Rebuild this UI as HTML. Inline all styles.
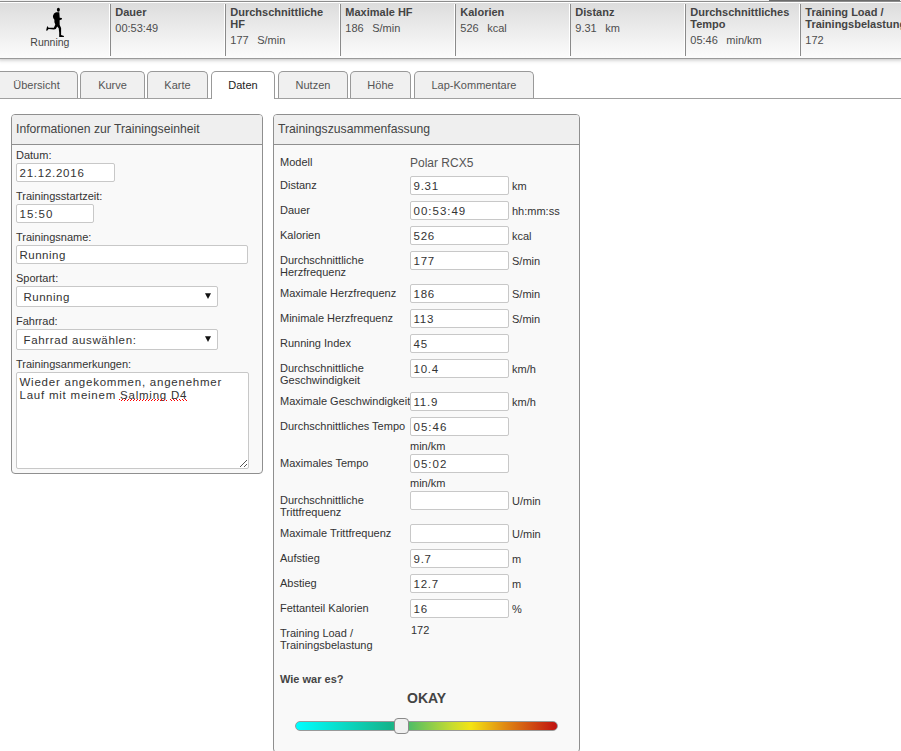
<!DOCTYPE html>
<html><head><meta charset="utf-8">
<style>
*{box-sizing:border-box;margin:0;padding:0}
html,body{width:901px;height:751px;overflow:hidden;background:#fff;font-family:"Liberation Sans",sans-serif;font-size:11px;color:#333}
.abs{position:absolute}
#hdr{position:absolute;left:-2px;top:1px;width:905px;height:58px;border-top:1px solid #8c8c8c;border-bottom:1px solid #9a9a9a;
 background:linear-gradient(#dcdcdc,#fcfcfc);box-shadow:0 1px 4px rgba(0,0,0,.25)}
#hdr:before{content:"";position:absolute;left:0;right:0;top:0;height:1px;background:#fff}
.sep{position:absolute;top:4px;height:52px;width:1px;background:#8a8a8a;box-shadow:-1px 0 0 #fff}
.ht{position:absolute;font-weight:bold;line-height:12px;color:#444;white-space:nowrap}
.hv{position:absolute;line-height:12px;color:#4d4d4d;white-space:nowrap}
.hv span{margin-left:8.5px}
#tabs{position:absolute;left:0;top:98px;width:901px;height:1px;background:#a0a0a0;z-index:1}
.tab{position:absolute;top:71px;height:28px;border:1px solid #999;border-bottom:none;border-radius:5px 5px 0 0;background:#f0f0f0;color:#555;text-align:center;line-height:27px;font-size:11px}
.tab.act{background:#fff;color:#222;height:28px;z-index:2}
.panel{position:absolute;top:114px;border:1px solid #8f8f8f;border-radius:4px;background:#f9f9f9;overflow:hidden}
.ph{height:30px;border-bottom:1px solid #8f8f8f;background:#efefef;font-size:12.2px;color:#444;padding-left:4px;line-height:29px}
.lbl{position:absolute;color:#333;white-space:nowrap;line-height:12px}
.inp{position:absolute;border:1px solid #c8c8c8;border-radius:2px;background:#fff;color:#333;font-size:11.5px;letter-spacing:.75px;white-space:nowrap;padding-left:2.5px;line-height:18px}
.sel .arr{position:absolute;left:187.5px;top:6px}
.sq{position:relative}
.sq:before,.sq:after{content:"";position:absolute;left:-1px;right:0;height:1px;background:repeating-linear-gradient(90deg,#f00 0 1px,transparent 1px 3px)}
.sq:before{top:10px}
.sq:after{top:11px;left:.5px}
.unit{position:absolute;color:#333;white-space:nowrap;line-height:12px}
</style></head><body>

<div id="hdr"></div>
<div class="abs" style="left:769px;top:0;width:131px;height:1px;background:#6b6b6b;z-index:3"></div>
<!-- runner icon -->
<svg class="abs" style="left:40px;top:4px" width="30" height="36" viewBox="0 0 30 36">
 <ellipse cx="18.4" cy="5.8" rx="1.5" ry="2.05" fill="#000"/>
 <path d="M16 8.3 L19.3 8.2 L19.7 13.8 L21.8 13.9 L22 15.3 L19.6 16.3 L19.7 21 L21.1 24 L21.1 31.1 L24 32.1 L23.8 33.1 L19.2 33.1 L19.2 28.7 L18.7 24.2 L17.2 22.6 L15.8 24.9 L13.9 25.4 L8.6 24.9 L7.1 26.8 L6.1 26.4 L7.2 22 L8.6 23.8 L13.9 23.8 L15.3 20.6 L14.4 18.2 L14.4 15.8 L13.2 13.9 L12.9 12 L14 9.5 Z" fill="#000"/>
</svg>
<div class="abs" style="left:30.3px;top:36.2px;font-size:10.5px;color:#444;line-height:12px">Running</div>

<div class="sep" style="left:110px"></div>
<div class="sep" style="left:225px"></div>
<div class="sep" style="left:340px"></div>
<div class="sep" style="left:455px"></div>
<div class="sep" style="left:570px"></div>
<div class="sep" style="left:685px"></div>
<div class="sep" style="left:800px"></div>

<div class="ht" style="left:115.3px;top:6px">Dauer</div>
<div class="hv" style="left:115.3px;top:22px">00:53:49</div>
<div class="ht" style="left:230.3px;top:6px">Durchschnittliche<br>HF</div>
<div class="hv" style="left:230.3px;top:34px">177<span>S/min</span></div>
<div class="ht" style="left:345.3px;top:6px">Maximale HF</div>
<div class="hv" style="left:345.3px;top:22px">186<span>S/min</span></div>
<div class="ht" style="left:460.3px;top:6px">Kalorien</div>
<div class="hv" style="left:460.3px;top:22px">526<span>kcal</span></div>
<div class="ht" style="left:575.3px;top:6px">Distanz</div>
<div class="hv" style="left:575.3px;top:22px">9.31<span>km</span></div>
<div class="ht" style="left:690.3px;top:6px">Durchschnittliches<br>Tempo</div>
<div class="hv" style="left:690.3px;top:34px">05:46<span>min/km</span></div>
<div class="ht" style="left:805.3px;top:6px">Training Load /<br>Trainingsbelastung</div>
<div class="hv" style="left:805.3px;top:34px">172</div>

<!-- tabs -->
<div id="tabs"></div>
<div class="tab" style="left:-5px;width:83px">Übersicht</div>
<div class="tab" style="left:80px;width:65px">Kurve</div>
<div class="tab" style="left:147px;width:61px">Karte</div>
<div class="tab act" style="left:211px;width:64px">Daten</div>
<div class="tab" style="left:278px;width:70px">Nutzen</div>
<div class="tab" style="left:350px;width:61px">Höhe</div>
<div class="tab" style="left:414px;width:120px">Lap-Kommentare</div>

<!-- left panel -->
<div class="panel" style="left:11px;width:252px;height:360px">
 <div class="ph">Informationen zur Trainingseinheit</div>
</div>
<div class="lbl" style="left:16px;top:149px">Datum:</div>
<div class="inp" style="left:16px;top:163px;width:99px;height:19px">21.12.2016</div>
<div class="lbl" style="left:16px;top:190px">Trainingsstartzeit:</div>
<div class="inp" style="left:16px;top:204px;width:78px;height:19px;letter-spacing:1px">15:50</div>
<div class="lbl" style="left:16px;top:231px">Trainingsname:</div>
<div class="inp" style="left:16px;top:245px;width:232px;height:19px;letter-spacing:.5px">Running</div>
<div class="lbl" style="left:16px;top:272px">Sportart:</div>
<div class="inp sel" style="left:16px;top:286px;width:202px;height:21px;padding-left:6.5px;line-height:20px;letter-spacing:.5px">Running<svg class="arr" width="7" height="7" viewBox="0 0 7 7"><polygon points="0,0.2 6,0.2 3,6" fill="#111"/></svg></div>
<div class="lbl" style="left:16px;top:315px">Fahrrad:</div>
<div class="inp sel" style="left:16px;top:329px;width:202px;height:21px;padding-left:6.5px;line-height:20px;letter-spacing:.63px">Fahrrad auswählen:<svg class="arr" width="7" height="7" viewBox="0 0 7 7"><polygon points="0,0.2 6,0.2 3,6" fill="#111"/></svg></div>
<div class="lbl" style="left:16px;top:358px">Trainingsanmerkungen:</div>
<div class="inp" style="left:16px;top:372px;width:233px;height:97px;line-height:13px;padding-top:3px;letter-spacing:.77px">Wieder angekommen, angenehmer<br>Lauf mit meinem <span class="sq">Salming</span> <span class="sq">D4</span></div>
<svg class="abs" style="left:239px;top:459px" width="9" height="9" viewBox="0 0 9 9" shape-rendering="crispEdges" fill="#555"><rect x="1" y="7" width="1" height="1"/><rect x="2" y="6" width="1" height="1"/><rect x="3" y="5" width="1" height="1"/><rect x="4" y="4" width="1" height="1"/><rect x="5" y="3" width="1" height="1"/><rect x="6" y="2" width="1" height="1"/><rect x="7" y="1" width="1" height="1"/><rect x="5" y="7" width="1" height="1"/><rect x="6" y="6" width="1" height="1"/><rect x="7" y="5" width="1" height="1"/></svg>

<!-- right panel -->
<div class="panel" style="left:273px;width:307px;height:639px">
 <div class="ph">Trainingszusammenfassung</div>
</div>

<div class="lbl" style="left:280px;top:156px">Modell</div>
<div class="abs" style="left:410px;top:156px;font-size:12px;line-height:14px;color:#555">Polar RCX5</div>
<div class="lbl" style="left:280px;top:179px">Distanz</div>
<div class="inp" style="left:410px;top:176px;width:99px;height:19px">9.31</div>
<div class="unit" style="left:512px;top:180px">km</div>
<div class="lbl" style="left:280px;top:204px">Dauer</div>
<div class="inp" style="left:410px;top:201px;width:99px;height:19px;letter-spacing:1px">00:53:49</div>
<div class="unit" style="left:512px;top:205px">hh:mm:ss</div>
<div class="lbl" style="left:280px;top:229px">Kalorien</div>
<div class="inp" style="left:410px;top:226px;width:99px;height:19px">526</div>
<div class="unit" style="left:512px;top:230px">kcal</div>
<div class="lbl" style="left:280px;top:254px">Durchschnittliche<br>Herzfrequenz</div>
<div class="inp" style="left:410px;top:251px;width:99px;height:19px">177</div>
<div class="unit" style="left:512px;top:255px">S/min</div>
<div class="lbl" style="left:280px;top:287px">Maximale Herzfrequenz</div>
<div class="inp" style="left:410px;top:284px;width:99px;height:19px">186</div>
<div class="unit" style="left:512px;top:288px">S/min</div>
<div class="lbl" style="left:280px;top:312px">Minimale Herzfrequenz</div>
<div class="inp" style="left:410px;top:309px;width:99px;height:19px">113</div>
<div class="unit" style="left:512px;top:313px">S/min</div>
<div class="lbl" style="left:280px;top:337px">Running Index</div>
<div class="inp" style="left:410px;top:334px;width:99px;height:19px">45</div>
<div class="lbl" style="left:280px;top:362px">Durchschnittliche<br>Geschwindigkeit</div>
<div class="inp" style="left:410px;top:359px;width:99px;height:19px">10.4</div>
<div class="unit" style="left:512px;top:363px">km/h</div>
<div class="lbl" style="left:280px;top:395px">Maximale Geschwindigkeit</div>
<div class="inp" style="left:410px;top:392px;width:99px;height:19px">11.9</div>
<div class="unit" style="left:512px;top:396px">km/h</div>
<div class="lbl" style="left:280px;top:420px">Durchschnittliches Tempo</div>
<div class="inp" style="left:410px;top:417px;width:99px;height:19px;letter-spacing:1px">05:46</div>
<div class="unit" style="left:410px;top:440px">min/km</div>
<div class="lbl" style="left:280px;top:457px">Maximales Tempo</div>
<div class="inp" style="left:410px;top:454px;width:99px;height:19px;letter-spacing:1px">05:02</div>
<div class="unit" style="left:410px;top:477px">min/km</div>
<div class="lbl" style="left:280px;top:494px">Durchschnittliche<br>Trittfrequenz</div>
<div class="inp" style="left:410px;top:491px;width:99px;height:19px"></div>
<div class="unit" style="left:512px;top:495px">U/min</div>
<div class="lbl" style="left:280px;top:527px">Maximale Trittfrequenz</div>
<div class="inp" style="left:410px;top:524px;width:99px;height:19px"></div>
<div class="unit" style="left:512px;top:528px">U/min</div>
<div class="lbl" style="left:280px;top:552px">Aufstieg</div>
<div class="inp" style="left:410px;top:549px;width:99px;height:19px">9.7</div>
<div class="unit" style="left:512px;top:553px">m</div>
<div class="lbl" style="left:280px;top:577px">Abstieg</div>
<div class="inp" style="left:410px;top:574px;width:99px;height:19px">12.7</div>
<div class="unit" style="left:512px;top:578px">m</div>
<div class="lbl" style="left:280px;top:602px">Fettanteil Kalorien</div>
<div class="inp" style="left:410px;top:599px;width:99px;height:19px">16</div>
<div class="unit" style="left:512px;top:603px">%</div>
<div class="lbl" style="left:280px;top:627px">Training Load /<br>Trainingsbelastung</div>
<div class="unit" style="left:411px;top:624px">172</div>
<div class="abs" style="left:280px;top:673px;font-weight:bold;color:#444;line-height:12px">Wie war es?</div>
<div class="abs" style="left:407px;top:690px;font-weight:bold;color:#444;font-size:14px;line-height:16px">OKAY</div>
<div class="abs" style="left:295px;top:721px;width:263px;height:10px;border:1px solid #999;border-radius:5px;background:linear-gradient(90deg,#00ffff 0%,#14b48c 36%,#5cc060 45%,#c8dc30 60%,#f4e414 67%,#e08a14 80%,#c01010 100%)"></div>
<div class="abs" style="left:394px;top:718px;width:15px;height:16px;border:1px solid #8a8a8a;border-radius:4px;background:#f0f0f0"></div>
</body></html>
